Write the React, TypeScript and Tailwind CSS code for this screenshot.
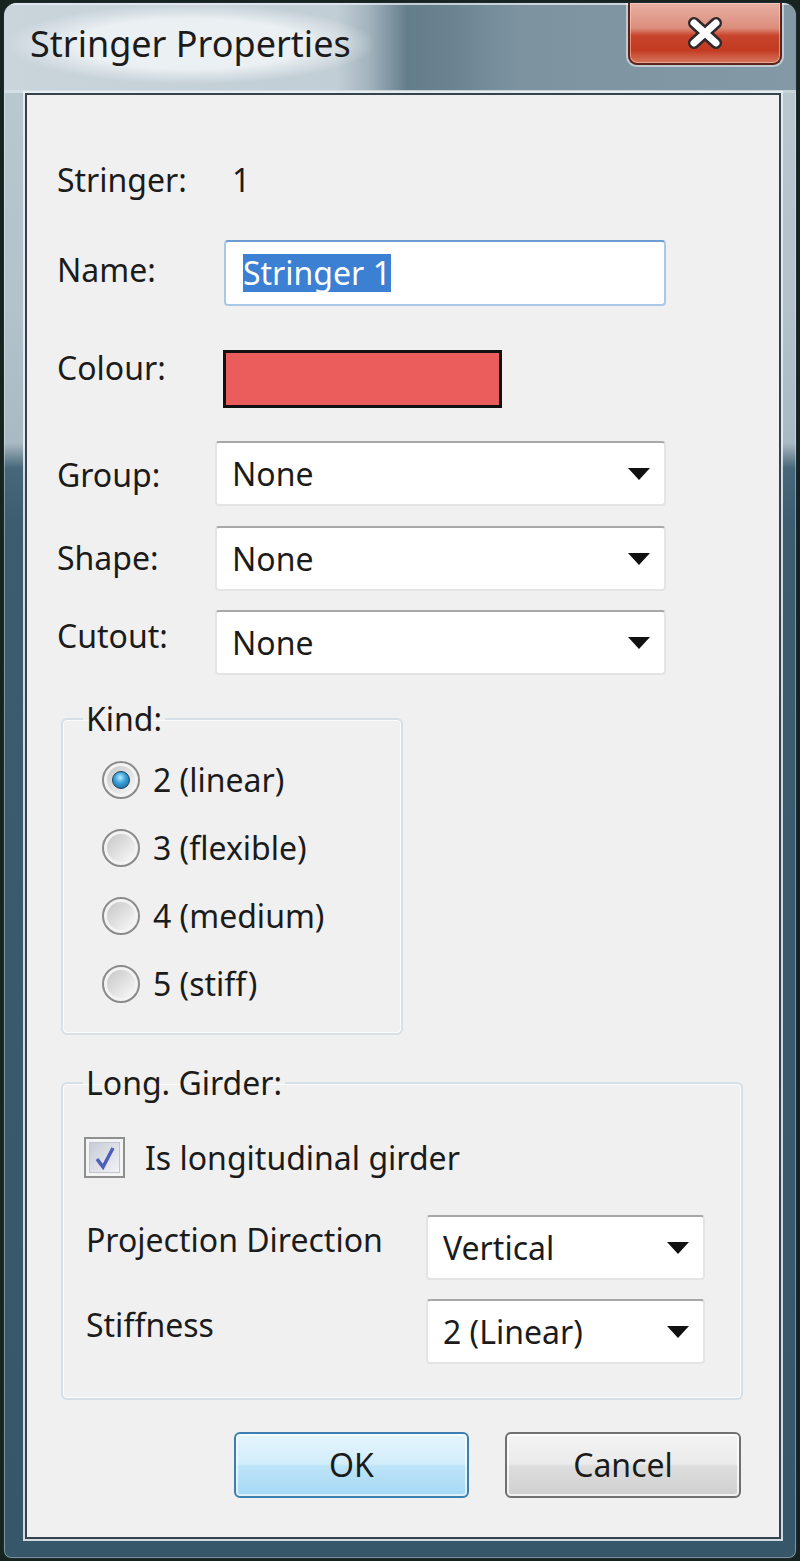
import React from "react";

function Arrow() {
  return (
    <svg width="22" height="12" viewBox="0 0 22 12">
      <path d="M0 0H22L11 12Z" fill="#111" />
    </svg>
  );
}

function Combo({ value, className }: { value: string; className: string }) {
  return (
    <div
      className={`flex h-[65px] items-center justify-between rounded-[4px] border-2 border-[#e4e4e4] border-t-[#a8a8a8] bg-white pl-[15px] pr-[14px] ${className}`}
    >
      <span>{value}</span>
      <Arrow />
    </div>
  );
}

function Radio({ checked }: { checked?: boolean }) {
  return (
    <span className="flex h-[38px] w-[38px] shrink-0 items-center justify-center rounded-full border-2 border-[#8b8b8b] bg-[#f3f3f3]">
      {checked ? (
        <span className="flex h-[28px] w-[28px] items-center justify-center rounded-full bg-[linear-gradient(135deg,#c9c9c9,#f7f7f7)]">
          <span className="h-[18px] w-[18px] rounded-full border border-[#17405e] bg-[radial-gradient(circle_at_45%_35%,#b9ecff_0%,#3ea2d8_40%,#0f5a8a_100%)]" />
        </span>
      ) : (
        <span className="h-[28px] w-[28px] rounded-full bg-[linear-gradient(135deg,#c6c6c6,#fafafa)]" />
      )}
    </span>
  );
}

function Checkbox() {
  return (
    <span className="flex h-[41px] w-[41px] shrink-0 items-center justify-center border-2 border-[#8e8f8f] bg-[#f4f4f4]">
      <span className="flex h-[31px] w-[31px] items-center justify-center border border-[#c3c6cc] bg-[linear-gradient(135deg,#c9ccd6,#f2f3f6)]">
        <svg width="26" height="28" viewBox="0 0 26 28">
          <path d="M5 15L11 23L21 4" fill="none" stroke="#4d60b9" strokeWidth="3.5" />
        </svg>
      </span>
    </span>
  );
}

function Button({ label, primary }: { label: string; primary?: boolean }) {
  return (
    <div
      className={
        primary
          ? "flex h-[66px] w-[235px] items-center justify-center rounded-[6px] border-2 border-[#3c7fb1] bg-[linear-gradient(180deg,#e6f5fd_0%,#d2edfb_48%,#bde4f8_52%,#a6d8f4_100%)] shadow-[inset_0_0_0_2px_rgba(255,255,255,0.6)]"
          : "flex h-[66px] w-[236px] items-center justify-center rounded-[6px] border-2 border-[#707070] bg-[linear-gradient(180deg,#f3f3f3_0%,#ebebeb_48%,#dddddd_52%,#cfcfcf_100%)] shadow-[inset_0_0_0_2px_rgba(255,255,255,0.7)]"
      }
    >
      {label}
    </div>
  );
}

function TitleBar() {
  return (
    <div className="flex h-[90px] shrink-0 items-start bg-[linear-gradient(90deg,#c9d4db_0%,#c2ced5_42%,#a3b4be_46%,#647d8b_51%,#6c8492_57%,#7d93a0_65%,#8399a5_100%)] shadow-[inset_0_2px_0_rgba(235,240,243,0.7),inset_0_-3px_0_rgba(215,225,231,0.8)]">
      <div className="ml-[2px] mt-[1px] bg-[radial-gradient(closest-side,rgba(236,241,244,0.97)_62%,rgba(236,241,244,0)_100%)] px-[24px] py-[20px] text-[36px]">
        Stringer Properties
      </div>
      <div className="ml-auto mr-[14px] flex h-[62px] w-[154px] items-center justify-center rounded-b-[9px] border-2 border-t-0 border-[#5e2318] bg-[linear-gradient(180deg,#e8b0a3_0%,#dc8d7c_42%,#c9452d_54%,#c23a21_78%,#d7765e_100%)] shadow-[0_0_0_2px_rgba(255,255,255,0.5),inset_0_0_0_1px_rgba(255,220,210,0.5)]">
        <svg width="40" height="34" viewBox="0 0 40 34">
          <path d="M9 7L31 27M31 7L9 27" stroke="#30282a" strokeWidth="12" strokeLinecap="round" />
          <path d="M9 7L31 27M31 7L9 27" stroke="#ffffff" strokeWidth="7" strokeLinecap="round" />
        </svg>
      </div>
    </div>
  );
}

function DialogBody() {
  return (
    <div className="flex flex-col pl-[30px] pt-[65px]">
      <div className="flex h-[40px]">
        <span className="w-[175px]">Stringer:</span>
        <span>1</span>
      </div>

      <div className="mt-[40px] flex items-start">
        <span className="mt-[10px] w-[167px]">Name:</span>
        <div className="flex h-[66px] w-[442px] items-center rounded-[4px] border-2 border-[#a9c8e8] border-t-[#6c9cd2] bg-white pl-[17px]">
          <span className="bg-[#3b80d2] leading-[38px] text-white">Stringer 1</span>
        </div>
      </div>

      <div className="mt-[42px] flex items-start">
        <span className="w-[166px]">Colour:</span>
        <div className="mt-[2px] h-[58px] w-[279px] border-[3px] border-[#111] bg-[#eb5d5d]" />
      </div>

      <div className="mt-[33px] flex items-start">
        <span className="mt-[14px] w-[158px]">Group:</span>
        <Combo value="None" className="w-[451px]" />
      </div>
      <div className="mt-[20px] flex items-start">
        <span className="mt-[12px] w-[158px]">Shape:</span>
        <Combo value="None" className="w-[451px]" />
      </div>
      <div className="mt-[19px] flex items-start">
        <span className="mt-[6px] w-[158px]">Cutout:</span>
        <Combo value="None" className="w-[451px]" />
      </div>

      {/* Kind */}
      <fieldset className="ml-[4px] mt-[24px] w-[342px] rounded-[6px] border-2 border-[#d6dfe5] shadow-[inset_0_0_0_1px_#fbfcfd]">
        <legend className="ml-[20px] px-[3px]">Kind:</legend>
        <div className="flex flex-col gap-[28px] pb-[29px] pl-[39px] pt-[21px]">
          {["2 (linear)", "3 (flexible)", "4 (medium)", "5 (stiff)"].map((k, i) => (
            <div key={k} className="flex h-[40px] items-center gap-[13px]">
              <Radio checked={i === 0} />
              <span>{k}</span>
            </div>
          ))}
        </div>
      </fieldset>

      {/* Long. Girder */}
      <fieldset className="ml-[4px] mt-[28px] w-[682px] rounded-[6px] border-2 border-[#d6dfe5] shadow-[inset_0_0_0_1px_#fbfcfd]">
        <legend className="ml-[20px] px-[3px]">Long. Girder:</legend>
        <div className="flex flex-col pb-[34px] pl-[21px]">
          <div className="mt-[34px] flex h-[41px] items-center gap-[20px]">
            <Checkbox />
            <span>Is longitudinal girder</span>
          </div>
          <div className="mt-[37px] flex items-start">
            <span className="ml-[2px] mt-[5px] w-[340px]">Projection Direction</span>
            <Combo value="Vertical" className="w-[279px]" />
          </div>
          <div className="mt-[19px] flex items-start">
            <span className="ml-[2px] mt-[6px] w-[340px]">Stiffness</span>
            <Combo value="2 (Linear)" className="w-[279px]" />
          </div>
        </div>
      </fieldset>

      <div className="mt-[32px] flex justify-end gap-[36px] pr-[38px]">
        <Button label="OK" primary />
        <Button label="Cancel" />
      </div>
    </div>
  );
}

export default function App() {
  return (
    <div className="h-[1561px] w-[800px] bg-[#17231f] px-[3px] py-[2px] font-['Segoe_UI','Noto_Sans',sans-serif] text-[32px] leading-[40px] text-[#1b1b1b]">
      <div className="flex h-full flex-col overflow-hidden rounded-t-[14px] rounded-b-[8px] border border-[#1d2b33] bg-[linear-gradient(180deg,#cbd6dd_0px,#b9c7cf_90px,#b3c2cb_300px,#aabac4_440px,#47687a_465px,#3c5d70_520px,#36576a_100%)] shadow-[inset_0_0_0_1px_rgba(255,255,255,0.35)]">
        <TitleBar />
        <div className="mb-[19px] ml-[21px] mr-[15px] flex-1 border-2 border-[#34434c] bg-[#f0f0f0] shadow-[0_0_0_2px_rgba(235,241,244,0.85)]">
          <DialogBody />
        </div>
      </div>
    </div>
  );
}
